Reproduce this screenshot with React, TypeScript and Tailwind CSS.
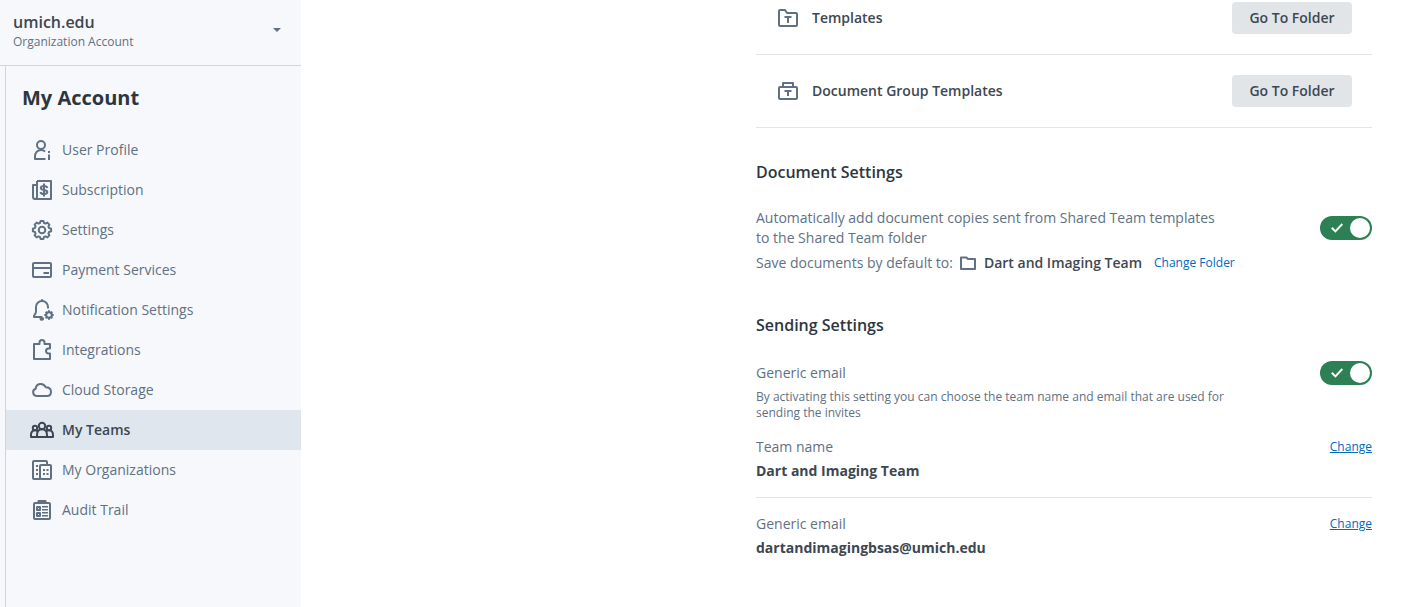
import type { ReactNode } from "react";

const GEAR_TEETH = [0, 45, 90, 135, 180, 225, 270, 315];

function Icon({ children }: { children: ReactNode }) {
  return (
    <svg
      viewBox="0 0 24 24"
      className="size-6 shrink-0"
      fill="none"
      stroke="currentColor"
      strokeWidth="2"
      strokeLinejoin="round"
      aria-hidden="true"
    >
      {children}
    </svg>
  );
}

const UserIcon = () => (
  <Icon>
    <circle cx="11" cy="7" r="4" />
    <path d="M15.5 21H5v-2.500c0-3.700 2.300-6.500 6-6.500 1.700 0 3 .6 4 1.700" />
    <path d="M19 16.500V22M19 13v2" />
  </Icon>
);

const SubscriptionIcon = () => (
  <Icon>
    <path d="M7 3h14v18H5a2 2 0 0 1-2-2V7h4" />
    <path d="M7 3v16a2 2 0 0 1-2 2" />
    <path d="M17.300 10c-.3-1.300-1.500-2-3.300-2-1.900 0-3.200.7-3.200 2s1.300 1.700 3.200 2 3.300.8 3.300 2.100-1.400 2-3.300 2-3.200-.8-3.500-2.100M14 5.500v13" />
  </Icon>
);

const SettingsIcon = () => (
  <Icon>
    <path d="M10.600 2.900h2.800L14 5l1.500.6 1.900-1 2 2-1 1.900.6 1.500 2.100.6v2.800L19 14l-.6 1.500 1 1.900-2 2-1.900-1L14 19l-.6 2.100h-2.800L10 19l-1.500-.6-1.900 1-2-2 1-1.900L5 14l-2.100-.6v-2.800L5 10l.6-1.500-1-1.900 2-2 1.900 1L10 5z" />
    <circle cx="12" cy="12" r="3.300" />
  </Icon>
);

const PaymentIcon = () => (
  <Icon>
    <rect x="3" y="5" width="18" height="14" rx="1" />
    <path d="M3 10h18M13.500 15H19" />
  </Icon>
);

const NotificationIcon = () => (
  <Icon>
    <path d="M12.500 19H4v-1.300c1.300-1 2-2.300 2-4.500V9a6 6 0 0 1 6-6 6 6 0 0 1 6 6v1.500" />
    <path d="M12 1.300V3" />
    <path d="M10.500 20.500h2.700a1.300 1.300 0 0 1-2.700 0z" />
    <circle cx="19" cy="17" r="2.800" />
    {GEAR_TEETH.map((angle) => (
      <path
        key={angle}
        d="M19 14V12.300"
        transform={`rotate(${angle} 19 17)`}
      />
    ))}
  </Icon>
);

const IntegrationsIcon = () => (
  <Icon>
    <path d="M4 6h5.500V4.500a2.500 2.500 0 0 1 5 0V6H20v4.500h-1.500a2.500 2.500 0 0 0 0 5H20V21H4z" />
  </Icon>
);

const CloudIcon = () => (
  <Icon>
    <path d="M6.500 18a3.700 3.700 0 0 1-.8-7.200C5.900 8 8 6 10.800 6c2.200 0 4 1.200 4.900 3.200 3 0 5.300 1.600 5.300 4.600 0 2.600-1.600 4.200-4 4.200z" />
  </Icon>
);

const TeamsIcon = () => (
  <Icon>
    <circle cx="12" cy="8" r="3.200" />
    <path d="M7 19v-2c0-3.300 1.800-5.800 5-5.800s5 2.500 5 5.800v2z" />
    <circle cx="5" cy="10" r="2.200" />
    <circle cx="19" cy="10" r="2.200" />
    <path d="M7 19H1v-2.500c0-2.300 1.600-4.200 4-4.200 1.100 0 2 .4 2.700 1.100M17 19h6v-2.500c0-2.300-1.600-4.200-4-4.200-1.100 0-2 .4-2.700 1.100" />
  </Icon>
);

const OrganizationsIcon = () => (
  <Icon>
    <path d="M17 7V4a1 1 0 0 0-1-1H4a1 1 0 0 0-1 1v16a1 1 0 0 0 1 1h6" />
    <rect x="10" y="7" width="11" height="14" rx="1" />
    <path d="M6 8h2M6 12h2M6 16h2M13 12h2M16.500 12h2M13 16h2M16.500 16h2" />
  </Icon>
);

const AuditIcon = () => (
  <Icon>
    <rect x="4" y="5" width="16" height="16" rx="1" />
    <path d="M8.500 5V3h7v2" />
    <path d="M7 9h3v3H7zM7 15h3v3H7z" />
    <path
      d="M12 8.800h6M12 11.800h6M12 14.800h6M12 17.800h6"
      strokeWidth="1.600"
    />
  </Icon>
);

const TemplateIcon = () => (
  <Icon>
    <path d="M4 4h5l2 3h9a1 1 0 0 1 1 1v11a1 1 0 0 1-1 1H4a1 1 0 0 1-1-1V5a1 1 0 0 1 1-1z" />
    <path d="M8.500 11h7M12 11v6" />
  </Icon>
);

const GroupTemplateIcon = () => (
  <Icon>
    <rect x="3" y="8" width="18" height="12" rx="1" />
    <path d="M7 8V4h10v4" />
    <path d="M8.500 12h7M12 12v5" />
  </Icon>
);

const NAV_ITEMS = [
  { name: "User Profile", icon: UserIcon },
  { name: "Subscription", icon: SubscriptionIcon },
  { name: "Settings", icon: SettingsIcon },
  { name: "Payment Services", icon: PaymentIcon },
  { name: "Notification Settings", icon: NotificationIcon },
  { name: "Integrations", icon: IntegrationsIcon },
  { name: "Cloud Storage", icon: CloudIcon },
  { name: "My Teams", icon: TeamsIcon, active: true },
  { name: "My Organizations", icon: OrganizationsIcon },
  { name: "Audit Trail", icon: AuditIcon },
];

const FOLDERS = [
  { name: "Templates", icon: TemplateIcon, padding: "pt-0.5 pb-5" },
  { name: "Document Group Templates", icon: GroupTemplateIcon, padding: "py-5" },
];

function Sidebar() {
  return (
    <aside className="flex w-[301px] shrink-0 flex-col bg-[#f7f8fc]">
      <button
        type="button"
        className="flex items-start justify-between border-b border-[#ccd6e0] pt-3 pr-5 pb-[13px] pl-[13px] text-left"
      >
        <span>
          <span className="block text-base leading-5 font-semibold text-[#3d4752]">
            umich.edu
          </span>
          <span className="block text-xs leading-5 text-[#5f7182]">
            Organization Account
          </span>
        </span>
        <svg viewBox="0 0 8 4" className="mt-4 h-1 w-2" aria-hidden="true">
          <path d="M0 0h8L4 4z" fill="#5f7182" />
        </svg>
      </button>

      <nav className="ml-[5px] grow border-l border-[#ccd6e0] pt-4">
        <h1 className="mb-4 pl-4 text-xl leading-8 font-bold text-[#2d3640]">
          My Account
        </h1>
        {NAV_ITEMS.map((item) => (
          <a
            key={item.name}
            href="#"
            aria-current={item.active ? "page" : undefined}
            className={`flex h-10 items-center gap-2 pl-6 text-sm ${
              item.active
                ? "bg-[#dfe6ed] font-semibold text-[#3d4752]"
                : "text-[#5f7182]"
            }`}
          >
            <item.icon />
            {item.name}
          </a>
        ))}
      </nav>
    </aside>
  );
}

function Toggle({ label }: { label: string }) {
  return (
    <label className="grid h-6 w-[52px] shrink-0 cursor-pointer items-center">
      <input
        type="checkbox"
        role="switch"
        defaultChecked
        aria-label={label}
        className="peer col-start-1 row-start-1 h-6 w-[52px] appearance-none rounded-full bg-[#9aa7b4] checked:bg-[#2c8053]"
      />
      <svg
        viewBox="0 0 12 10"
        className="pointer-events-none col-start-1 row-start-1 ml-[11px] h-2.5 w-3"
        fill="none"
        stroke="white"
        strokeWidth="2"
        aria-hidden="true"
      >
        <path d="M0.800 4.800l3.600 3.600L11.300 1" />
      </svg>
      <span className="pointer-events-none col-start-1 row-start-1 ml-0.5 size-5 rounded-full bg-white peer-checked:ml-[30px]" />
    </label>
  );
}

function TeamField({ label, value }: { label: string; value: string }) {
  return (
    <div className="flex items-start justify-between">
      <dl className="text-sm">
        <dt className="text-[#5f7182]">{label}</dt>
        <dd className="mt-1 font-bold text-[#3d4752]">{value}</dd>
      </dl>
      <a href="#" className="text-xs leading-5 text-[#0069c0] underline">
        Change
      </a>
    </div>
  );
}

export default function App() {
  return (
    <div className="flex min-h-screen bg-white font-['Open_Sans',sans-serif]">
      <Sidebar />

      <main className="flex min-w-0 flex-1 justify-end pr-[51px] pl-6">
        <div className="w-full max-w-[616px]">
          {/* Shared folders */}
          <ul>
            {FOLDERS.map((folder) => (
              <li
                key={folder.name}
                className={`flex items-center gap-3 border-b border-[#e3e5e8] px-5 text-[#5f7182] ${folder.padding}`}
              >
                <folder.icon />
                <span className="grow text-sm font-semibold text-[#3d4752]">
                  {folder.name}
                </span>
                <button
                  type="button"
                  className="h-8 w-[120px] rounded-sm bg-[#e1e5e8] text-sm font-semibold text-[#3d4752]"
                >
                  Go To Folder
                </button>
              </li>
            ))}
          </ul>

          {/* Document settings */}
          <section className="mt-8">
            <h2 className="text-base font-semibold text-[#2d3640]">
              Document Settings
            </h2>
            <div className="mt-6 flex items-center justify-between">
              <p className="max-w-[472px] text-sm text-[#5f7182]">
                Automatically add document copies sent from Shared Team
                templates to the Shared Team folder
              </p>
              <Toggle label="Automatically add document copies" />
            </div>
            <div className="flex min-h-[30px] items-center text-sm text-[#5f7182]">
              <span>Save documents by default to:</span>
              <svg
                viewBox="0 0 16 16"
                className="mr-2 ml-[7px] size-4"
                fill="none"
                stroke="currentColor"
                strokeWidth="2"
                strokeLinejoin="round"
                aria-hidden="true"
              >
                <path d="M1 2.500h5.500L8 4h7v10H1z" />
              </svg>
              <span className="font-semibold text-[#3d4752]">
                Dart and Imaging Team
              </span>
              <a href="#" className="ml-3 text-xs text-[#0069c0]">
                Change Folder
              </a>
            </div>
          </section>

          {/* Sending settings */}
          <section className="mt-[35px]">
            <h2 className="text-base font-semibold text-[#2d3640]">
              Sending Settings
            </h2>
            <div className="mt-6 flex items-center justify-between">
              <span className="text-sm text-[#5f7182]">Generic email</span>
              <Toggle label="Generic email" />
            </div>
            <p className="mt-1 max-w-[472px] text-xs text-[#5f7182]">
              By activating this setting you can choose the team name and email
              that are used for sending the invites
            </p>
            <div className="mt-4 border-b border-[#e3e5e8] pb-4">
              <TeamField label="Team name" value="Dart and Imaging Team" />
            </div>
            <div className="py-4">
              <TeamField
                label="Generic email"
                value="dartandimagingbsas@umich.edu"
              />
            </div>
          </section>
        </div>
      </main>
    </div>
  );
}
